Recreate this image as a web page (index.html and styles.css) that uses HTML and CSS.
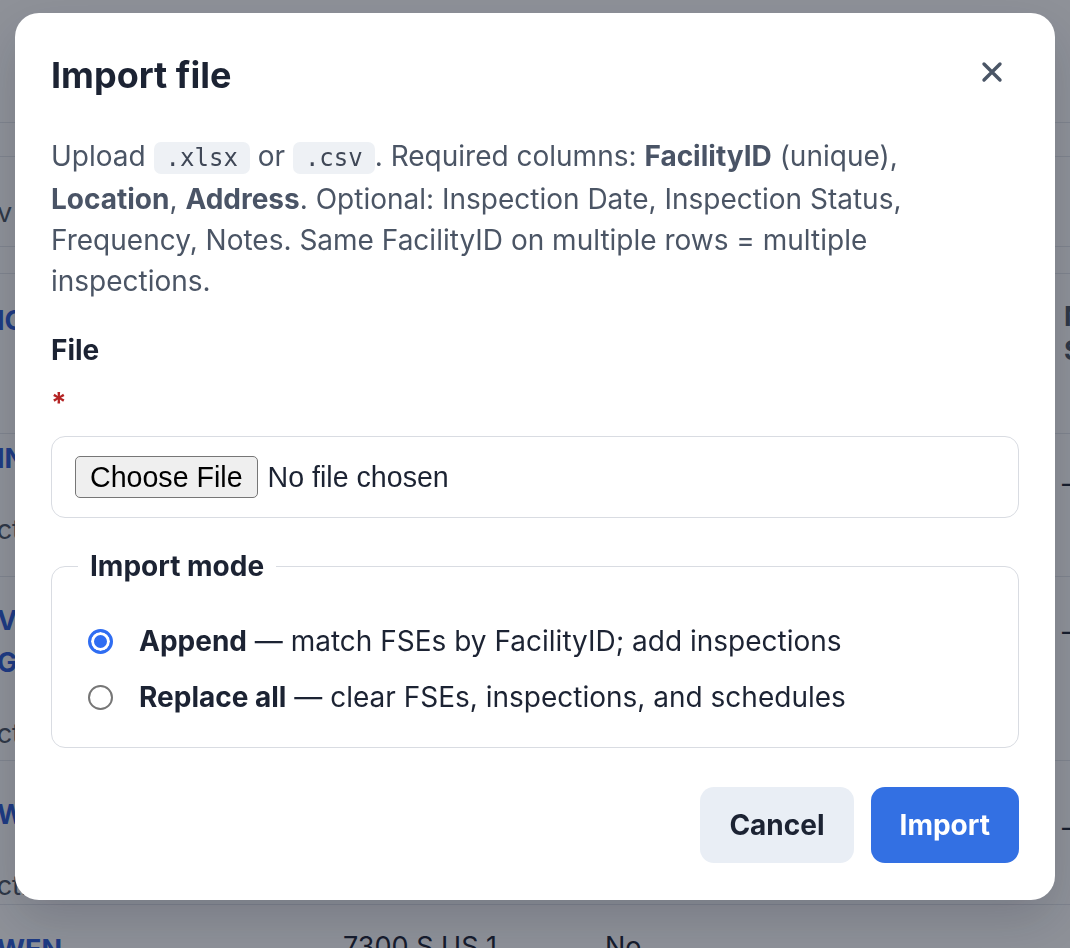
FILE: index.html
```html
<!DOCTYPE html>
<html lang="en">
<head>
<meta charset="utf-8">
<title>Import file</title>
<link rel="stylesheet" href="styles.css">
</head>
<body>
  <main class="page">
    <div class="row row-top"></div>
    <div class="row row-a"></div>
    <div class="row row-b"><div class="cell muted">v</div><div class="cell"></div><div class="cell"></div><div class="cell"></div></div>
    <div class="row row-c"></div>
    <div class="row row-head">
      <div class="cell"><span class="link">ICE HOUSE</span></div>
      <div class="cell"></div><div class="cell"></div>
      <div class="cell head-text">Next<br>Sched</div>
    </div>
    <div class="row row-1">
      <div class="cell"><span class="link">INN AT THE BAY</span><span class="sub">Active</span></div>
      <div class="cell"></div><div class="cell"></div>
      <div class="cell dash">—</div>
    </div>
    <div class="row row-2">
      <div class="cell"><span class="link">VIVA LA<br>GRILL</span><span class="sub">Active</span></div>
      <div class="cell"></div><div class="cell"></div>
      <div class="cell dash">—</div>
    </div>
    <div class="row row-3">
      <div class="cell"><span class="link">WOK EXPRESS</span><span class="sub">Active</span></div>
      <div class="cell"></div><div class="cell"></div>
      <div class="cell dash">—</div>
    </div>
    <div class="row row-4">
      <div class="cell"><span class="link">WEN</span></div>
      <div class="cell plain">7300 S US 1</div>
      <div class="cell plain">No</div>
      <div class="cell"></div>
    </div>
  </main>

  <div class="backdrop">
    <section class="dialog" role="dialog" aria-labelledby="import-title">
      <header class="dialog-head">
        <h2 class="dialog-title" id="import-title">Import file</h2>
        <button class="close" type="button" aria-label="Close">
          <svg width="22" height="22" viewBox="0 0 22 22" aria-hidden="true">
            <path d="M3 3L19 19M19 3L3 19" fill="none" stroke="currentColor" stroke-width="3.4" stroke-linecap="round"/>
          </svg>
        </button>
      </header>

      <p class="hint">Upload <code>.xlsx</code> or <code>.csv</code>. Required columns: <strong>FacilityID</strong> (unique), <strong>Location</strong>, <strong>Address</strong>. Optional: Inspection Date, Inspection Status, Frequency, Notes. Same FacilityID on multiple rows = multiple inspections.</p>

      <div class="field">
        <label class="field-label" for="import-file">File <span class="req">*</span></label>
        <div class="file-box">
          <input class="file-input" id="import-file" type="file" accept=".xlsx,.csv">
        </div>
      </div>

      <fieldset class="mode">
        <legend>Import mode</legend>
        <label class="option">
          <input type="radio" name="mode" value="append" checked>
          <span><strong>Append</strong> — match FSEs by FacilityID; add inspections</span>
        </label>
        <label class="option">
          <input type="radio" name="mode" value="replace">
          <span><strong>Replace all</strong> — clear FSEs, inspections, and schedules</span>
        </label>
      </fieldset>

      <footer class="actions">
        <button class="btn btn-secondary" type="button">Cancel</button>
        <button class="btn btn-primary" type="button">Import</button>
      </footer>
    </section>
  </div>
</body>
</html>
```

FILE: styles.css
```css
* {
  box-sizing: border-box;
}

html,
body {
  margin: 0;
  height: 100%;
}

body {
  font-family: Inter, "Noto Sans", sans-serif;
  background: #ffffff;
  color: #1c2333;
  overflow: hidden;
}

/* ---------- table page behind the dialog ---------- */

.page {
  margin-left: -3px;
  width: 1200px;
}

.row {
  display: grid;
  grid-template-columns: 346px 262px 455px 1fr;
  border-bottom: 1.5px solid #e3e6eb;
  font-size: 27px;
  line-height: 36px;
}

.row-top { height: 123px; }
.row-a { height: 34px; }
.row-b { height: 90px; padding-top: 38px; }
.row-c { height: 27px; }
.row-head { height: 160px; padding-top: 26px; }
.row-1 { height: 143px; padding-top: 4px; }
.row-2 { height: 184px; padding-top: 23px; }
.row-3 { height: 144px; padding-top: 33px; }
.row-4 { padding-top: 24px; height: 60px; }

.cell {
  display: flex;
  flex-direction: column;
  align-items: flex-start;
  white-space: nowrap;
}

.muted {
  color: #4b5563;
}

.link {
  color: #2b5bd6;
  font-weight: 700;
  line-height: 42px;
}

.sub {
  margin-top: 32px;
  margin-left: -19px;
  color: #4b5563;
}

.head-text {
  padding-left: 4px;
  font-weight: 700;
  color: #4b5563;
  line-height: 34px;
}

.dash {
  padding-left: 2px;
  padding-top: 28px;
  color: #1c2333;
}

.row-2 .dash { padding-top: 14px; }
.row-3 .dash { padding-top: 16px; }

.plain {
  color: #1c2333;
}

/* ---------- modal ---------- */

.backdrop {
  position: fixed;
  inset: 0;
  background: rgba(17, 24, 39, 0.47);
  display: flex;
  justify-content: center;
  align-items: flex-start;
  padding-top: 13px;
}

.dialog {
  width: 1040px;
  background: #ffffff;
  border-radius: 24px;
  padding: 36px 36px 37px;
  box-shadow: 0 20px 50px rgba(15, 23, 42, 0.18);
}

.dialog-head {
  display: flex;
  align-items: center;
  justify-content: space-between;
  height: 52px;
}

.dialog-title {
  margin: 0;
  font-size: 36px;
  line-height: 44px;
  font-weight: 700;
  color: #1c2333;
}

.close {
  width: 44px;
  height: 44px;
  margin: 0 5px 6px 0;
  padding: 0;
  border: 0;
  background: transparent;
  color: #4a5566;
  display: flex;
  align-items: center;
  justify-content: center;
  cursor: pointer;
}

.hint {
  margin: 35px 0 0;
  font-size: 28px;
  line-height: 41px;
  color: #4b5565;
}

.hint strong {
  font-weight: 700;
  color: #4a5466;
}

.hint code {
  font-family: "DejaVu Sans Mono", "Liberation Mono", monospace;
  font-size: 24px;
  padding: 2px 12px;
  border-radius: 7px;
  background: #eef1f5;
  color: #3f4756;
}

.field {
  margin-top: 28px;
  display: flex;
  flex-direction: column;
  gap: 12px;
}

.field-label {
  display: flex;
  flex-direction: column;
  gap: 12px;
  font-size: 28px;
  line-height: 41px;
  font-weight: 700;
  color: #1c2333;
}

.req {
  color: #b42323;
  font-weight: 700;
}

.file-box {
  height: 82px;
  padding: 0 23px;
  border: 1.5px solid #d9dce2;
  border-radius: 14px;
  display: flex;
  align-items: center;
}

.file-input {
  font-family: "Liberation Sans", Arial, sans-serif;
  font-size: 28.6px;
  color: #1c2333;
}

.file-input::file-selector-button {
  height: 42px;
  margin-right: 10px;
  padding: 0 14px;
  font: inherit;
  color: #000000;
  background: #efefef;
  border: 1.5px solid #767676;
  border-radius: 5px;
}

.mode {
  margin: 28px 0 0;
  padding: 26px 36px 22px;
  border: 1.5px solid #d9dce2;
  border-radius: 14px;
}

.mode legend {
  margin-left: -10px;
  padding: 0 12px;
  font-size: 28px;
  line-height: 41px;
  font-weight: 700;
  color: #1c2333;
}

.option {
  display: flex;
  align-items: center;
  gap: 26px;
  min-height: 56px;
  font-size: 28px;
  color: #1c2333;
}

.option strong {
  font-weight: 700;
}

.option input {
  appearance: none;
  flex: none;
  width: 25px;
  height: 25px;
  margin: 0;
  border: 2px solid #767676;
  border-radius: 50%;
  background: #ffffff;
}

.option input:checked {
  border: 3px solid #2f6df2;
  background: #2f6df2;
  box-shadow: inset 0 0 0 3px #ffffff;
}

.actions {
  margin-top: 39px;
  display: flex;
  justify-content: flex-end;
  gap: 17px;
}

.btn {
  height: 76px;
  padding: 0 29px;
  border: 0;
  border-radius: 14px;
  font-family: inherit;
  font-size: 28px;
  font-weight: 700;
  cursor: pointer;
}

.btn-secondary {
  background: #e9eef5;
  color: #1c2333;
}

.btn-primary {
  background: #3370e3;
  color: #ffffff;
}
```
